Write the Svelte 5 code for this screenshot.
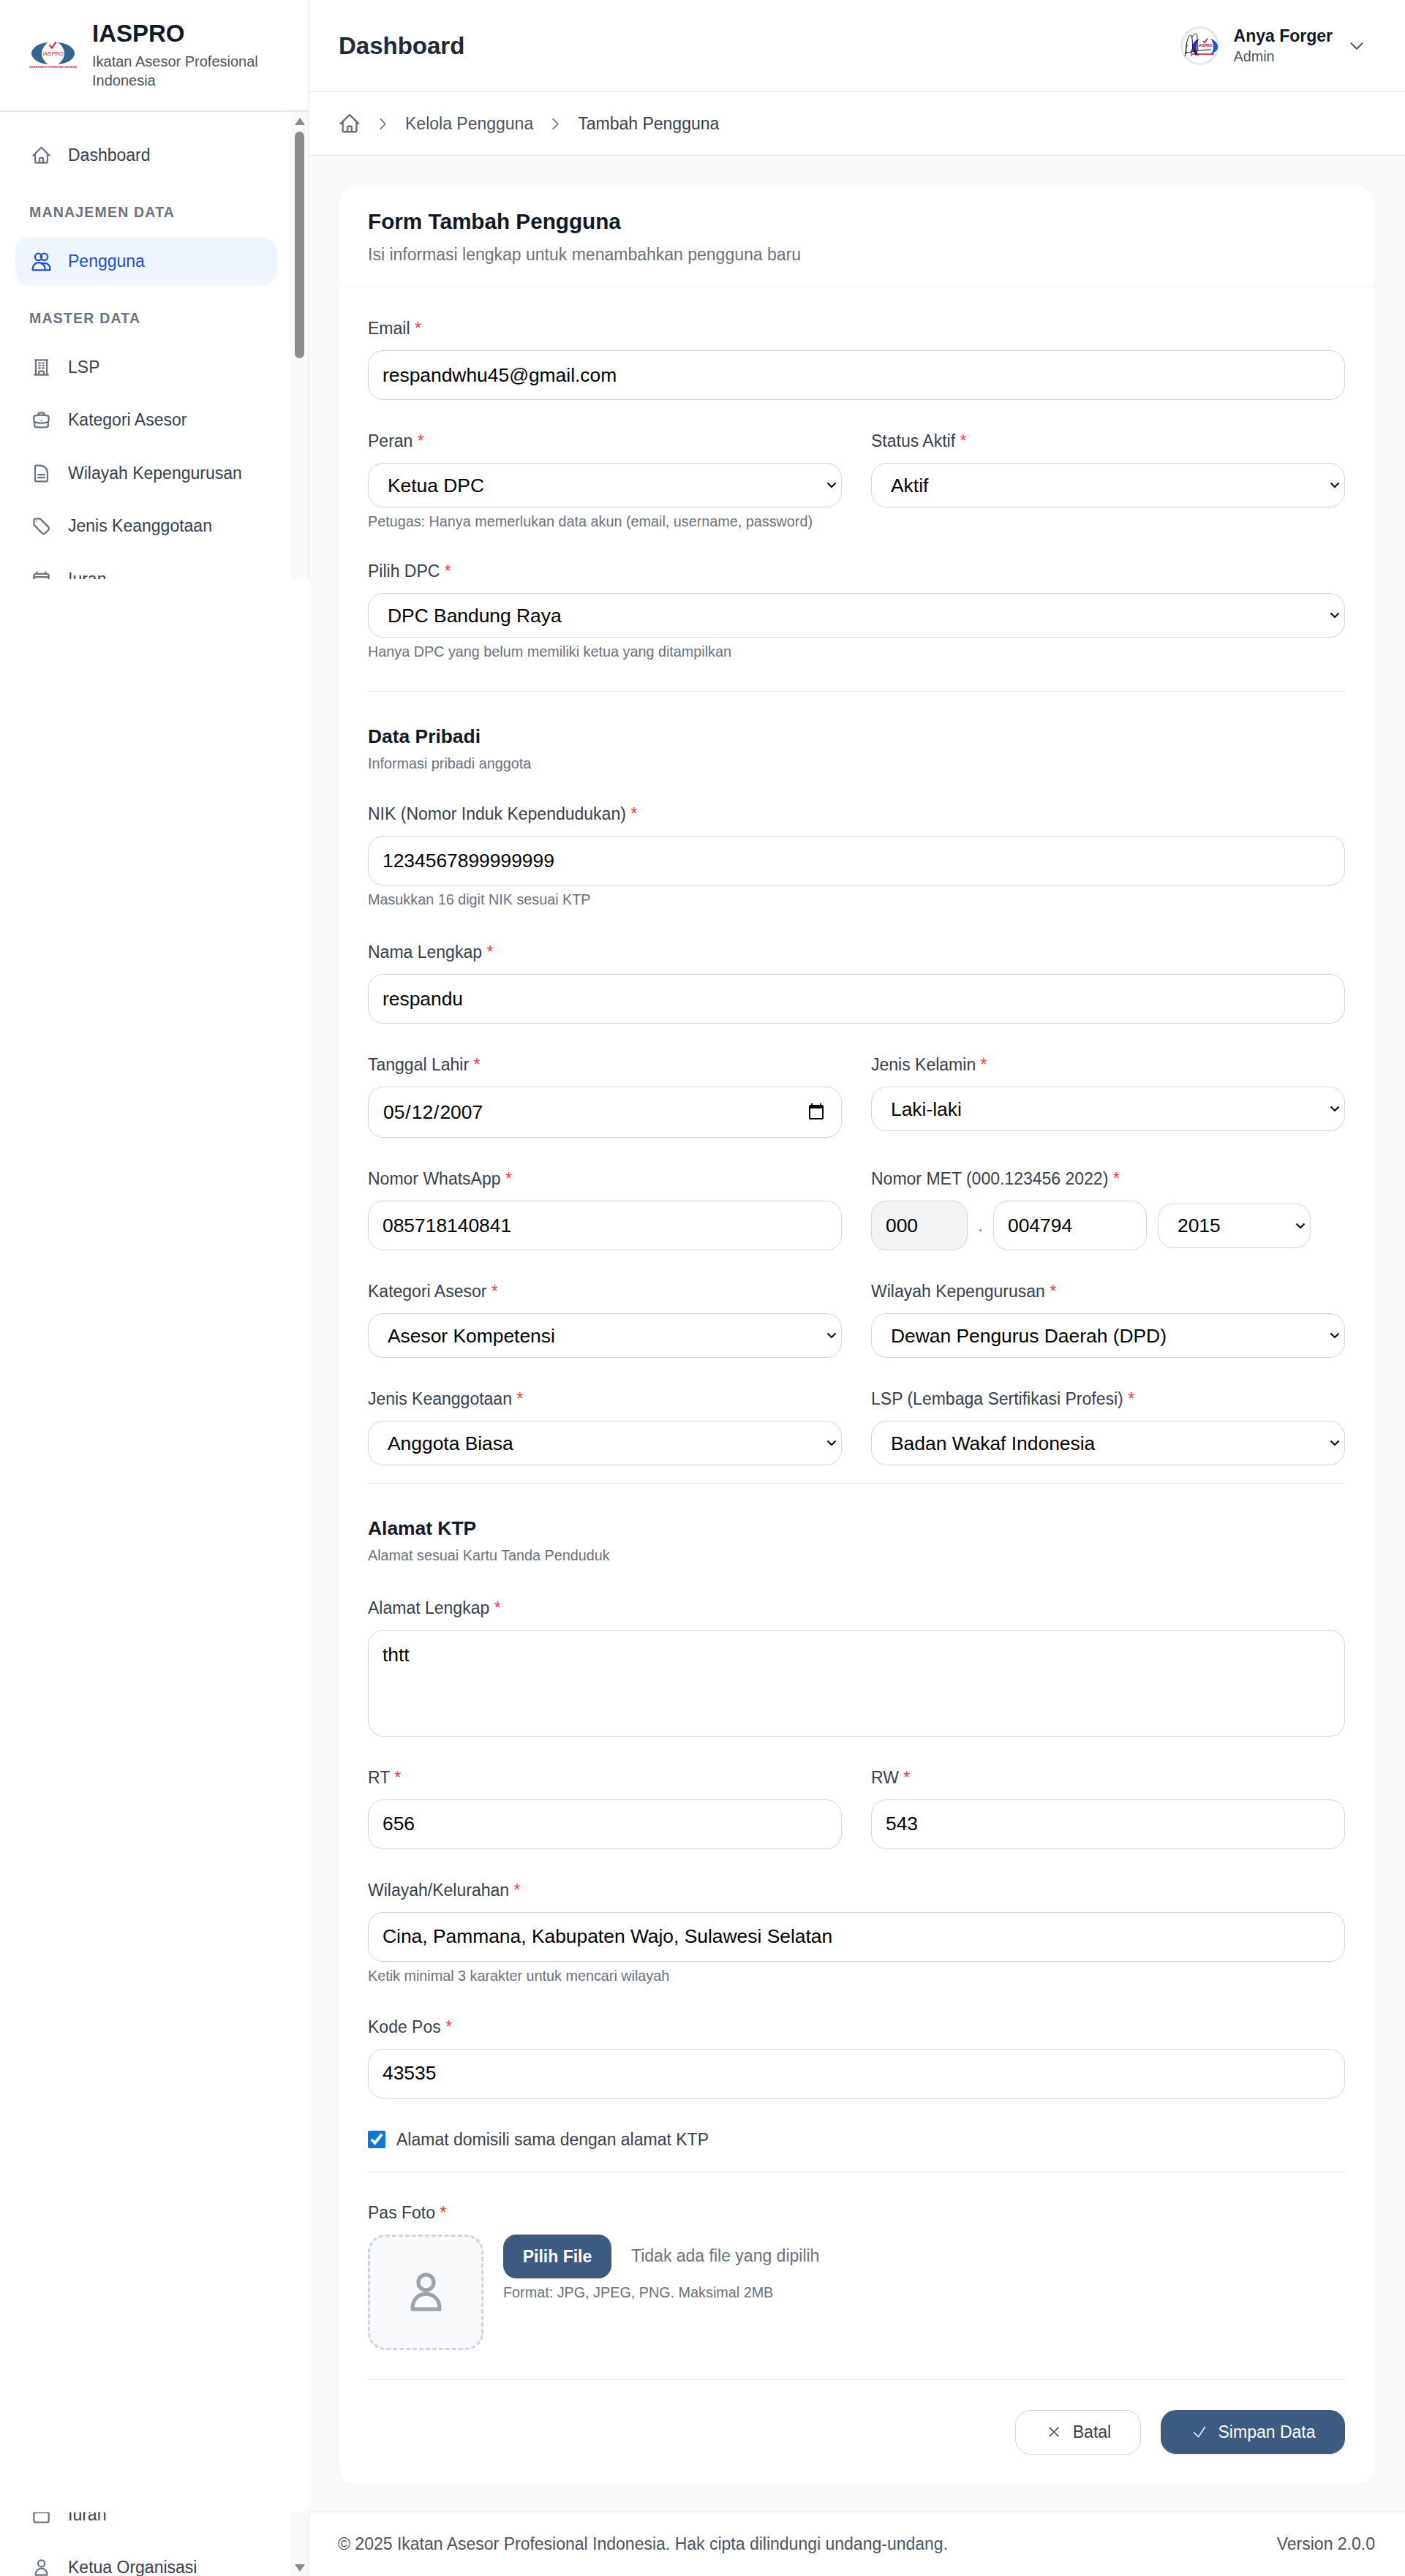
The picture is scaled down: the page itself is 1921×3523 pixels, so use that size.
<script>
	const icons = {
		home: 'M2.25 12l8.954-8.955c.44-.439 1.152-.439 1.591 0L21.75 12M4.5 9.75v10.125c0 .621.504 1.125 1.125 1.125H9.75v-4.875c0-.621.504-1.125 1.125-1.125h2.25c.621 0 1.125.504 1.125 1.125V21h4.125c.621 0 1.125-.504 1.125-1.125V9.75M8.25 21h8.25',
		users: 'M8.5 2.3a4.2 4.2 0 100 8.4 4.2 4.2 0 000-8.4zM15.5 2.3a4.2 4.2 0 110 8.4 4.2 4.2 0 010-8.4zM1.5 22.5V21a7.5 7.5 0 0115 0v1.5H1.5zM16.5 22.5h6V21a6.5 6.5 0 00-10-5.8',
		building: 'M3.75 21h16.5M4.5 3h15M5.25 3v18m13.5-18v18M9 6.75h1.5m-1.5 3h1.5m-1.5 3h1.5m3-6H15m-1.5 3H15m-1.5 3H15M9 21v-3.375c0-.621.504-1.125 1.125-1.125h3.75c.621 0 1.125.504 1.125 1.125V21',
		briefcase: 'M20.25 14.15v4.25c0 1.094-.787 2.036-1.872 2.18-2.087.277-4.216.42-6.378.42s-4.291-.143-6.378-.42c-1.085-.144-1.872-1.086-1.872-2.18v-4.25m16.5 0a2.18 2.18 0 00.75-1.661V8.706c0-1.081-.768-2.015-1.837-2.175a48.114 48.114 0 00-3.413-.387m4.5 8.006c-.194.165-.42.295-.673.38A23.978 23.978 0 0112 15.75c-2.648 0-5.195-.429-7.577-1.22a2.016 2.016 0 01-.673-.38m0 0A2.18 2.18 0 013 12.489V8.706c0-1.081.768-2.015 1.837-2.175a48.111 48.111 0 013.413-.387m7.5 0V5.25A2.25 2.25 0 0013.5 3h-3a2.25 2.25 0 00-2.25 2.25v.894m7.5 0a48.667 48.667 0 00-7.5 0M12 12.75h.008v.008H12v-.008z',
		document: 'M8.25 13.5h7.5m-7.5 3.5h7.5M10.5 2.25H5.625c-.621 0-1.125.504-1.125 1.125v17.25c0 .621.504 1.125 1.125 1.125h12.75c.621 0 1.125-.504 1.125-1.125V11.25a9 9 0 00-9-9z',
		tag: 'M9.568 3H5.25A2.25 2.25 0 003 5.25v4.318c0 .597.237 1.17.659 1.591l9.581 9.581c.699.699 1.78.872 2.607.33a18.095 18.095 0 005.223-5.223c.542-.827.369-1.908-.33-2.607L11.16 3.66A2.25 2.25 0 009.568 3zM6 6h.008v.008H6V6z',
		calendar: 'M6.75 3v2.25M17.25 3v2.25M3 18.75V7.5a2.25 2.25 0 012.25-2.25h13.5A2.25 2.25 0 0121 7.5v11.25m-18 0A2.25 2.25 0 005.25 21h13.5A2.25 2.25 0 0021 18.75m-18 0v-7.5A2.25 2.25 0 015.25 9h13.5A2.25 2.25 0 0121 11.25v7.5',
		user: 'M16 7a4 4 0 11-8 0 4 4 0 018 0zM5 21v-1a7 7 0 0114 0v1H5z',
		chevronDown: 'M19.5 8.25l-7.5 7.5-7.5-7.5',
		chevronRight: 'M8.25 4.5l7.5 7.5-7.5 7.5',
		close: 'M6 18L18 6M6 6l12 12',
		check: 'M4.5 12.75l6 6 9-13.5'
	};

	const masterItems = [
		{ label: 'LSP', icon: 'building' },
		{ label: 'Kategori Asesor', icon: 'briefcase' },
		{ label: 'Wilayah Kepengurusan', icon: 'document' },
		{ label: 'Jenis Keanggotaan', icon: 'tag' },
		{ label: 'Iuran', icon: 'calendar' }
	];
</script>

{#snippet icon(name, cls)}
	<svg class={cls} viewBox="0 0 24 24" fill="none" stroke="currentColor" stroke-width="2" stroke-linecap="round" stroke-linejoin="round"><path d={icons[name]} /></svg>
{/snippet}

{#snippet navItem(item)}
	<div class="nav-item">
		{@render icon(item.icon, 'nav-icon')}
		<span>{item.label}</span>
	</div>
{/snippet}

<div class="layout">
	<aside class="sidebar">
		<div class="brand">
			<svg class="logo" viewBox="0 0 66 40">
				<path d="M26 2C12 3 3 10 3 17s9 14 23 15c-6-4-9-10-9-15s3-11 9-15z" fill="#35658c" />
				<path d="M39 2c14 1 23 8 23 15s-9 14-23 15c6-4 9-10 9-15s-3-11-9-15z" fill="#35658c" />
				<path d="M27.5 5.5l3.5 4 5.5-8" fill="none" stroke="#e11d2e" stroke-width="2" />
				<text x="32.5" y="19.8" text-anchor="middle" class="logo-name">IASPRO</text>
				<text x="0" y="37" textLength="65" lengthAdjust="spacingAndGlyphs" class="logo-sub">IKATAN ASESOR PROFESIONAL INDONESIA</text>
			</svg>
			<div class="brand-text">
				<div class="brand-name">IASPRO</div>
				<div class="brand-sub">Ikatan Asesor Profesional Indonesia</div>
			</div>
		</div>

		<nav class="nav-top">
			{@render navItem({ label: 'Dashboard', icon: 'home' })}
			<div class="nav-section">MANAJEMEN DATA</div>
			<div class="nav-item active">
				{@render icon('users', 'nav-icon')}
				<span>Pengguna</span>
			</div>
			<div class="nav-section">MASTER DATA</div>
			{#each masterItems as item}
				{@render navItem(item)}
			{/each}
			<div class="scrollbar">
				<i class="arrow-up"></i>
				<i class="thumb"></i>
			</div>
		</nav>

		<div class="sidebar-gap"></div>

		<nav class="nav-bottom">
			{@render navItem({ label: 'Iuran', icon: 'calendar' })}
			{@render navItem({ label: 'Ketua Organisasi', icon: 'user' })}
			<div class="scrollbar">
				<i class="arrow-down"></i>
			</div>
		</nav>
	</aside>

	<div class="main">
		<header class="topbar">
			<h1>Dashboard</h1>
			<div class="user">
				<svg class="avatar" viewBox="0 0 53 53">
					<circle cx="26.5" cy="26.5" r="25" fill="#fff" stroke="#e5e7eb" stroke-width="3" />
					<path d="M26 17c-7 2-10 7-10 12s3 9 10 12c-3-3-4-8-4-12s1-9 4-12z" fill="#1d2fd0" />
					<path d="M41 17c6 2 10 6 10 11s-4 8-10 10c3-3 4-6 4-10s-1-8-4-11z" fill="#1d4fe0" />
					<path d="M31 20l2 2.5 4-6" fill="none" stroke="#d4122a" stroke-width="1.6" />
					<text x="34" y="28" text-anchor="middle" class="avatar-name">IASPRO</text>
					<path d="M16 38h30" stroke="#c01030" stroke-width="1.5" />
					<path d="M6 41c2-6 1-14 3-20 1-5 3-9 5-9 3 0 2 14 3 22m-2-18c2-4 5-7 7-5 2 3 0 12 2 22M6 37c8-2 20-5 36-5M10 25c-3 4-3 9-1 12m6 4V31m6 9V32" fill="none" stroke="#111" stroke-width="1" />
				</svg>
				<div class="user-text">
					<div class="user-name">Anya Forger</div>
					<div class="user-role">Admin</div>
				</div>
				{@render icon('chevronDown', 'user-chevron')}
			</div>
		</header>

		<div class="breadcrumb">
			{@render icon('home', 'crumb-home')}
			{@render icon('chevronRight', 'crumb-sep')}
			<span>Kelola Pengguna</span>
			{@render icon('chevronRight', 'crumb-sep')}
			<span class="crumb-current">Tambah Pengguna</span>
		</div>

		<main class="content">
			<div class="card">
				<div class="card-head">
					<h2>Form Tambah Pengguna</h2>
					<p>Isi informasi lengkap untuk menambahkan pengguna baru</p>
				</div>

				<form class="card-body">
					<div class="group">
						<label for="email">Email <span class="req">*</span></label>
						<input id="email" type="email" value="respandwhu45@gmail.com" />
					</div>

					<div class="cols cols-first">
						<div class="group">
							<label for="peran">Peran <span class="req">*</span></label>
							<select id="peran"><option>Ketua DPC</option></select>
							<p class="help">Petugas: Hanya memerlukan data akun (email, username, password)</p>
						</div>
						<div class="group">
							<label for="status">Status Aktif <span class="req">*</span></label>
							<select id="status"><option>Aktif</option></select>
						</div>
					</div>

					<div class="group">
						<label for="dpc">Pilih DPC <span class="req">*</span></label>
						<select id="dpc"><option>DPC Bandung Raya</option></select>
						<p class="help">Hanya DPC yang belum memiliki ketua yang ditampilkan</p>
					</div>

					<div class="section">
						<h3>Data Pribadi</h3>
						<p class="help">Informasi pribadi anggota</p>
					</div>

					<div class="group group-nik">
						<label for="nik">NIK (Nomor Induk Kependudukan) <span class="req">*</span></label>
						<input id="nik" value="1234567899999999" />
						<p class="help">Masukkan 16 digit NIK sesuai KTP</p>
					</div>

					<div class="group">
						<label for="nama">Nama Lengkap <span class="req">*</span></label>
						<input id="nama" value="respandu" />
					</div>

					<div class="cols">
						<div class="group">
							<label for="lahir">Tanggal Lahir <span class="req">*</span></label>
							<input id="lahir" class="date" type="date" value="2007-05-12" />
						</div>
						<div class="group">
							<label for="jk">Jenis Kelamin <span class="req">*</span></label>
							<select id="jk"><option>Laki-laki</option></select>
						</div>
					</div>

					<div class="cols">
						<div class="group">
							<label for="wa">Nomor WhatsApp <span class="req">*</span></label>
							<input id="wa" value="085718140841" />
						</div>
						<div class="group">
							<label for="met">Nomor MET (000.123456 2022) <span class="req">*</span></label>
							<div class="met">
								<input class="met-prefix" value="000" readonly />
								<span class="met-dot">.</span>
								<input id="met" class="met-number" value="004794" />
								<select class="met-year"><option>2015</option></select>
							</div>
						</div>
					</div>

					<div class="cols">
						<div class="group">
							<label for="kategori">Kategori Asesor <span class="req">*</span></label>
							<select id="kategori"><option>Asesor Kompetensi</option></select>
						</div>
						<div class="group">
							<label for="wilayah">Wilayah Kepengurusan <span class="req">*</span></label>
							<select id="wilayah"><option>Dewan Pengurus Daerah (DPD)</option></select>
						</div>
					</div>

					<div class="cols cols-last">
						<div class="group">
							<label for="jenis">Jenis Keanggotaan <span class="req">*</span></label>
							<select id="jenis"><option>Anggota Biasa</option></select>
						</div>
						<div class="group">
							<label for="lsp">LSP (Lembaga Sertifikasi Profesi) <span class="req">*</span></label>
							<select id="lsp"><option>Badan Wakaf Indonesia</option></select>
						</div>
					</div>

					<div class="section section-ktp">
						<h3>Alamat KTP</h3>
						<p class="help">Alamat sesuai Kartu Tanda Penduduk</p>
					</div>

					<div class="group">
						<label for="alamat">Alamat Lengkap <span class="req">*</span></label>
						<textarea id="alamat">thtt</textarea>
					</div>

					<div class="cols">
						<div class="group">
							<label for="rt">RT <span class="req">*</span></label>
							<input id="rt" value="656" />
						</div>
						<div class="group">
							<label for="rw">RW <span class="req">*</span></label>
							<input id="rw" value="543" />
						</div>
					</div>

					<div class="group">
						<label for="kel">Wilayah/Kelurahan <span class="req">*</span></label>
						<input id="kel" value="Cina, Pammana, Kabupaten Wajo, Sulawesi Selatan" />
						<p class="help">Ketik minimal 3 karakter untuk mencari wilayah</p>
					</div>

					<div class="group">
						<label for="pos">Kode Pos <span class="req">*</span></label>
						<input id="pos" value="43535" />
					</div>

					<label class="check-row">
						<input type="checkbox" checked />
						<span>Alamat domisili sama dengan alamat KTP</span>
					</label>

					<div class="photo-block">
						<div class="photo-label">Pas Foto <span class="req">*</span></div>
						<div class="photo-row">
							<div class="photo-box">
								{@render icon('user', 'photo-icon')}
							</div>
							<div>
								<div class="file-row">
									<span class="file-btn">Pilih File</span>
									<span class="file-name">Tidak ada file yang dipilih</span>
								</div>
								<p class="help">Format: JPG, JPEG, PNG. Maksimal 2MB</p>
							</div>
						</div>
					</div>

					<div class="actions">
						<button type="button" class="btn btn-cancel">{@render icon('close', 'btn-icon')}Batal</button>
						<button type="button" class="btn btn-save">{@render icon('check', 'btn-icon')}Simpan Data</button>
					</div>
				</form>
			</div>
		</main>

		<footer class="footer">
			<span>© 2025 Ikatan Asesor Profesional Indonesia. Hak cipta dilindungi undang-undang.</span>
			<span class="version">Version 2.0.0</span>
		</footer>
	</div>
</div>

<style>
	:global(body) {
		margin: 0;
		font-family: "Liberation Sans", Arial, sans-serif;
		font-size: 23px;
		color: #374151;
		background: #fff;
	}

	.layout {
		display: flex;
		min-height: 100vh;
	}

	/* sidebar */
	.sidebar {
		width: 422px;
		flex-shrink: 0;
		display: flex;
		flex-direction: column;
		background: #fff;
	}

	.brand {
		height: 153px;
		box-sizing: border-box;
		border-bottom: 2px solid #e5e7eb;
		border-right: 1px solid #e5e7eb;
		display: flex;
		align-items: center;
		gap: 20px;
		padding: 0 24px 0 40px;
		flex-shrink: 0;
	}

	.logo {
		width: 66px;
		height: 40px;
		flex-shrink: 0;
	}

	.logo-name {
		font-size: 7.6px;
		fill: #e11d2e;
	}

	.logo-sub {
		font-size: 2.6px;
		font-weight: 700;
		fill: #d92035;
	}

	.brand-name {
		font-size: 33px;
		font-weight: 700;
		line-height: 36px;
		color: #111827;
	}

	.brand-sub {
		font-size: 20px;
		line-height: 26px;
		margin-top: 7px;
		color: #4b5563;
	}

	.nav-top {
		position: relative;
		height: 639px;
		box-sizing: border-box;
		padding: 26px 42px 0 20px;
		border-right: 1px solid #e5e7eb;
		overflow: hidden;
		flex-shrink: 0;
	}

	.sidebar-gap {
		flex: 1;
	}

	.nav-bottom {
		position: relative;
		height: 87px;
		box-sizing: border-box;
		padding: 0 42px 0 20px;
		border-right: 1px solid #e5e7eb;
		overflow: hidden;
		flex-shrink: 0;
	}

	.nav-bottom .nav-item:first-child {
		margin-top: -30px;
	}

	.nav-item {
		display: flex;
		align-items: center;
		gap: 23px;
		height: 66px;
		margin-bottom: 6.5px;
		padding: 0 23px;
		border-radius: 21px;
		color: #374151;
		flex-shrink: 0;
	}

	.nav-item.active {
		background: #eff6ff;
		color: #1d4ed8;
	}

	.nav-icon {
		width: 27px;
		height: 27px;
		flex-shrink: 0;
		color: #6b7280;
	}

	.active .nav-icon {
		color: #1d4ed8;
	}

	.nav-section {
		height: 27px;
		line-height: 27px;
		font-size: 19.5px;
		font-weight: 700;
		letter-spacing: 1.2px;
		color: #6b7280;
		padding-left: 20px;
		margin: 31.5px 0 20.5px;
	}

	.scrollbar {
		position: absolute;
		top: 0;
		right: 0;
		bottom: 0;
		width: 23px;
		background: #fafafa;
	}

	.arrow-up,
	.arrow-down {
		position: absolute;
		left: 5px;
		width: 0;
		height: 0;
		border-left: 7px solid transparent;
		border-right: 7px solid transparent;
	}

	.arrow-up {
		top: 8px;
		border-bottom: 10px solid #8a8a8a;
	}

	.arrow-down {
		bottom: 6px;
		border-top: 10px solid #8a8a8a;
	}

	.thumb {
		position: absolute;
		top: 27px;
		left: 5px;
		width: 13px;
		height: 310px;
		border-radius: 7px;
		background: #8c8c8c;
	}

	/* main column */
	.main {
		flex: 1;
		min-width: 0;
		display: flex;
		flex-direction: column;
		background: #f9fafb;
	}

	.topbar {
		height: 126px;
		box-sizing: border-box;
		background: #fff;
		border-bottom: 1px solid #e5e7eb;
		display: flex;
		align-items: center;
		justify-content: space-between;
		padding: 0 54px 0 41px;
	}

	h1 {
		margin: 0;
		font-size: 33px;
		font-weight: 700;
		color: #1f2937;
	}

	.user {
		display: flex;
		align-items: center;
	}

	.avatar {
		width: 53px;
		height: 53px;
		margin-right: 20px;
	}

	.avatar-name {
		font-size: 5px;
		font-weight: 700;
		fill: #b01030;
	}

	.user-name {
		font-size: 23px;
		font-weight: 700;
		line-height: 30px;
		color: #111827;
	}

	.user-role {
		font-size: 19.8px;
		line-height: 27px;
		color: #4b5563;
	}

	.user-chevron {
		width: 24px;
		height: 24px;
		margin-left: 21px;
		color: #4b5563;
	}

	.breadcrumb {
		height: 87px;
		box-sizing: border-box;
		background: #fff;
		border-bottom: 1px solid #e5e7eb;
		display: flex;
		align-items: center;
		gap: 20px;
		padding: 0 41px;
		color: #4b5563;
	}

	.crumb-home {
		width: 30px;
		height: 30px;
		color: #6b7280;
	}

	.crumb-sep {
		width: 21px;
		height: 21px;
		color: #6b7280;
	}

	.crumb-current {
		color: #374151;
	}

	.content {
		flex: 1;
		padding: 41px 41px 35px 40px;
	}

	.card {
		background: #fff;
		border: 1px solid #f3f4f6;
		border-radius: 24px;
	}

	.card-head {
		height: 137px;
		box-sizing: border-box;
		border-bottom: 1px solid #f3f4f6;
		padding: 30px 40px 0;
	}

	h2 {
		margin: 0;
		font-size: 29.7px;
		font-weight: 700;
		line-height: 36px;
		color: #111827;
	}

	.card-head p {
		margin: 11px 0 0;
		color: #6b7280;
		line-height: 32px;
	}

	.card-body {
		padding: 41px 40px 40px;
	}

	.group {
		margin-bottom: 40px;
		min-width: 0;
	}

	.group-nik {
		margin-bottom: 42px;
	}

	.cols {
		display: grid;
		grid-template-columns: 1fr 1fr;
		gap: 0 40px;
	}

	.cols-first .group {
		margin-bottom: 38px;
	}

	.cols-last .group {
		margin-bottom: 24px;
	}

	label,
	.photo-label {
		display: block;
		line-height: 32px;
		margin-bottom: 14px;
		color: #374151;
	}

	.req {
		color: #ef4444;
	}

	input,
	select,
	textarea {
		display: block;
		width: 100%;
		box-sizing: border-box;
		font-family: "Liberation Sans", Arial, sans-serif;
		font-size: 26.4px;
		color: #000;
		background-color: #fff;
		border: 1.5px solid #d1d5db;
		border-radius: 21px;
	}

	input {
		height: 68px;
		padding: 0 19px;
	}

	input.date {
		height: 70px;
	}

	select {
		height: 61px;
		padding: 0 26px;
		appearance: none;
		background-image: url("data:image/svg+xml,%3Csvg xmlns='http://www.w3.org/2000/svg' viewBox='0 0 14 9'%3E%3Cpath d='M1.5 1.5 7 7l5.5-5.5' fill='none' stroke='%23111' stroke-width='2.2'/%3E%3C/svg%3E");
		background-repeat: no-repeat;
		background-size: 14px 9px;
		background-position: right 6px center;
	}

	textarea {
		height: 146px;
		padding: 18px 19px;
		resize: none;
	}

	.help {
		margin: 6px 0 0;
		font-size: 19.8px;
		line-height: 27px;
		color: #6b7280;
	}

	.section {
		border-top: 1px solid #e5e7eb;
		padding-top: 43px;
		margin-bottom: 39px;
	}

	.section-ktp {
		margin-bottom: 41.5px;
	}

	h3 {
		margin: 0;
		font-size: 26.4px;
		font-weight: 700;
		line-height: 36px;
		color: #111827;
	}

	.met {
		display: flex;
		align-items: center;
	}

	.met-prefix {
		width: 132px;
		background: #f3f4f6;
		flex-shrink: 0;
	}

	.met-dot {
		width: 35px;
		text-align: center;
		color: #6b7280;
		flex-shrink: 0;
	}

	.met-number {
		width: 210px;
		flex-shrink: 0;
	}

	.met-year {
		width: 209px;
		margin-left: 15px;
		flex-shrink: 0;
	}

	.check-row {
		display: flex;
		align-items: center;
		gap: 15px;
		margin-bottom: 28px;
	}

	.check-row input {
		width: 24px;
		height: 24px;
		margin: 0;
		padding: 0;
		accent-color: #0a78d7;
		flex-shrink: 0;
	}

	.photo-block {
		border-top: 1px solid #e5e7eb;
		padding-top: 39px;
	}

	.photo-row {
		display: flex;
		gap: 27px;
	}

	.photo-box {
		width: 158px;
		height: 158px;
		box-sizing: border-box;
		border: 3px dashed #d1d5db;
		border-radius: 24px;
		background: #f9fafb;
		display: flex;
		align-items: center;
		justify-content: center;
	}

	.photo-icon {
		width: 63px;
		height: 63px;
		color: #9ca3af;
	}

	.file-row {
		display: flex;
		align-items: center;
		gap: 27px;
	}

	.file-btn {
		display: block;
		width: 148px;
		height: 60px;
		line-height: 60px;
		text-align: center;
		border-radius: 18px;
		background: #3d5a80;
		color: #fff;
		font-weight: 700;
	}

	.file-name {
		color: #6b7280;
	}

	.actions {
		border-top: 1px solid #e5e7eb;
		margin-top: 40px;
		padding-top: 41px;
		display: flex;
		justify-content: flex-end;
		align-items: center;
		gap: 27px;
	}

	.btn {
		display: flex;
		align-items: center;
		justify-content: center;
		gap: 14px;
		box-sizing: border-box;
		font-family: "Liberation Sans", Arial, sans-serif;
		font-size: 23px;
		border-radius: 21px;
		cursor: pointer;
	}

	.btn-cancel {
		width: 172px;
		height: 61px;
		background: #fff;
		border: 1.5px solid #d1d5db;
		color: #374151;
	}

	.btn-save {
		width: 252px;
		height: 60px;
		background: #3d5a80;
		border: none;
		color: #fff;
		box-shadow: 0 1px 3px rgba(0, 0, 0, 0.1);
	}

	.btn-icon {
		width: 24px;
		height: 24px;
		stroke-width: 1.5;
	}

	.footer {
		height: 88px;
		box-sizing: border-box;
		background: #fff;
		border-top: 1px solid #e5e7eb;
		display: flex;
		align-items: center;
		justify-content: space-between;
		padding: 0 41px 0 40px;
		color: #4b5563;
	}
</style>
